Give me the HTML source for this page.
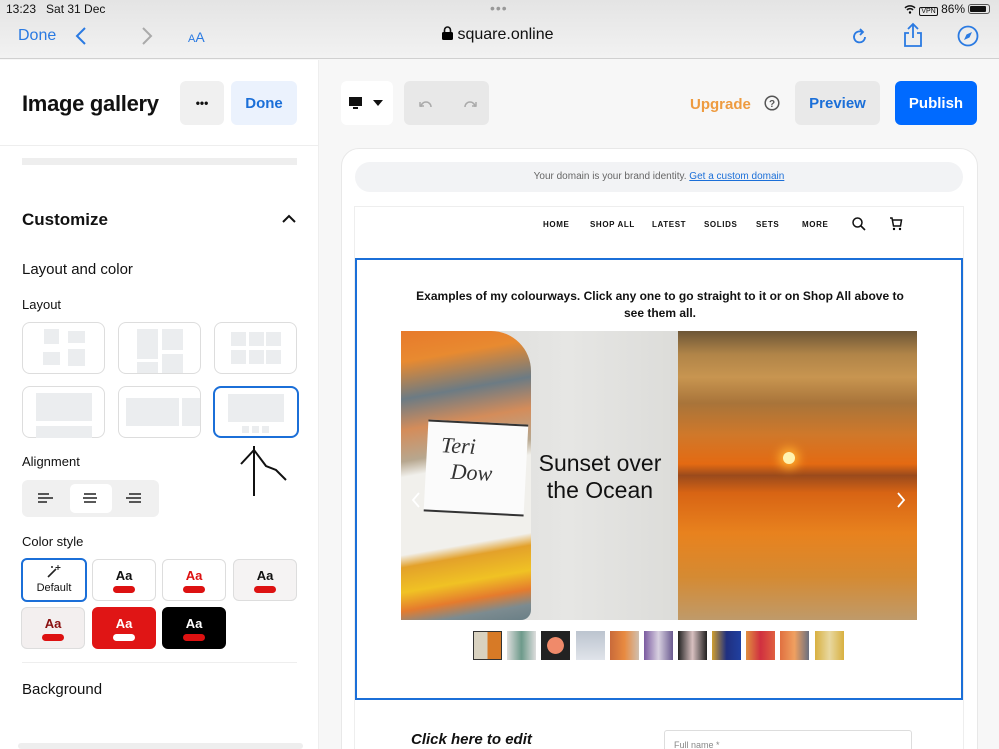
<!DOCTYPE html>
<html><head><meta charset="utf-8">
<style>
*{box-sizing:border-box;margin:0;padding:0}
html,body{width:999px;height:749px;overflow:hidden}
body{position:relative;font-family:"Liberation Sans",sans-serif;background:#f7f7f7;color:#111}
.a{position:absolute}
.top{left:0;top:0;width:999px;height:59px;background:linear-gradient(#e4e4e4,#f2f2f2);border-bottom:1px solid #d0d0d0}
.blue{color:#2a7ae2}
.side{left:0;top:60px;width:319px;height:689px;background:#fff;border-right:1px solid #eee}
.tile{position:absolute;width:83px;height:52px;border:1.5px solid #ddd;border-radius:8px;background:#fff}
.tile i{position:absolute;background:#ebedef}
.cs{position:absolute;width:64px;height:42px;border:1.5px solid #ddd;border-radius:6px;text-align:center;font-weight:bold;font-size:13px;padding-top:8px}
.cs b{display:block;width:22px;height:7px;border-radius:4px;background:#d11;margin:3px auto 0}
.nv{position:absolute;top:220px;font-size:8px;font-weight:bold;letter-spacing:.6px;white-space:nowrap}
.th{position:absolute;top:631px;width:29px;height:29px}
</style></head><body>
<div class="a top"></div>
<div class="a" style="left:6px;top:2px;font-size:12px">13:23&nbsp;&nbsp; Sat 31 Dec</div>
<div class="a" style="left:490px;top:0;font-size:14px;color:#999;letter-spacing:1px">•••</div>
<div class="a" style="left:904px;top:2px;font-size:12px;white-space:nowrap">
<svg width="12" height="10" viewBox="0 0 12 10" style="vertical-align:-1px"><path d="M1 4a7 7 0 0 1 10 0M3 6a4 4 0 0 1 6 0" stroke="#111" stroke-width="1.5" fill="none"/><circle cx="6" cy="8.5" r="1.2"/></svg>
<span style="font-size:7px;border:1px solid #111;border-radius:2px;padding:0 1px">VPN</span> 86% <span style="display:inline-block;width:22px;height:10px;border:1px solid #555;border-radius:3px;padding:1px;vertical-align:-1px"><span style="display:block;width:16px;height:6px;background:#111;border-radius:1px"></span></span></div>
<div class="a blue" style="left:18px;top:27px;font-size:16px">Done</div>
<svg class="a" style="left:74px;top:27px" width="14" height="18"><path d="M11 1L3 9l8 8" stroke="#2a7ae2" stroke-width="2" fill="none"/></svg>
<svg class="a" style="left:140px;top:27px" width="14" height="18"><path d="M3 1l8 8-8 8" stroke="#aaa" stroke-width="2" fill="none"/></svg>
<div class="a blue" style="left:188px;top:29px;font-size:14px"><span style="font-size:11px">A</span>A</div>
<div class="a" style="left:442px;top:26px;font-size:16px">
<svg width="11" height="14" viewBox="0 0 11 14" style="vertical-align:-1px"><rect x="0" y="6" width="11" height="8" rx="1.5"/><path d="M2.5 6V4a3 3 0 0 1 6 0v2" stroke="#111" stroke-width="1.6" fill="none"/></svg> square.online</div>
<svg class="a" style="left:850px;top:27px" width="20" height="20"><path d="M15 10a5.5 5.5 0 1 1-3-5" stroke="#2a7ae2" stroke-width="1.8" fill="none"/><path d="M10 2l3 3-3 3" stroke="#2a7ae2" stroke-width="1.8" fill="none"/></svg>
<svg class="a" style="left:902px;top:22px" width="22" height="26"><path d="M11 2v14M6 7l5-5 5 5M7 11H3v13h16V11h-4" stroke="#2a7ae2" stroke-width="1.8" fill="none"/></svg>
<svg class="a" style="left:957px;top:25px" width="22" height="22"><circle cx="11" cy="11" r="9.5" stroke="#2a7ae2" stroke-width="1.8" fill="none"/><path d="M15 7l-2.5 5.5L7 15l2.5-5.5z" fill="#2a7ae2"/></svg>

<div class="a side"></div>
<div class="a" style="left:22px;top:91px;font-size:22px;font-weight:bold;letter-spacing:-.3px">Image gallery</div>
<div class="a" style="left:180px;top:81px;width:44px;height:44px;background:#f0f0f0;border-radius:6px;text-align:center;line-height:44px;font-weight:bold;font-size:12px">•••</div>
<div class="a" style="left:231px;top:81px;width:66px;height:44px;background:#ebf2fd;border-radius:6px;text-align:center;line-height:46px;font-weight:bold;color:#1b6fd8;font-size:15px">Done</div>
<div class="a" style="left:0;top:145px;width:319px;height:1px;background:#eee"></div>
<div class="a" style="left:22px;top:158px;width:275px;height:7px;background:#eee"></div>
<div class="a" style="left:22px;top:210px;font-size:17px;font-weight:bold">Customize</div>
<svg class="a" style="left:282px;top:214px" width="14" height="10"><path d="M1 8l6-6 6 6" stroke="#111" stroke-width="2" fill="none"/></svg>
<div class="a" style="left:22px;top:261px;font-size:15px">Layout and color</div>
<div class="a" style="left:22px;top:297px;font-size:13px">Layout</div>
<div class="tile" style="left:22px;top:322px"><i style="left:21px;top:6px;width:15px;height:15px"></i><i style="left:45px;top:8px;width:17px;height:12px"></i><i style="left:20px;top:29px;width:17px;height:13px"></i><i style="left:45px;top:26px;width:17px;height:17px"></i></div>
<div class="tile" style="left:118px;top:322px"><i style="left:18px;top:6px;width:21px;height:30px"></i><i style="left:43px;top:6px;width:21px;height:21px"></i><i style="left:18px;top:39px;width:21px;height:11px"></i><i style="left:43px;top:31px;width:21px;height:19px"></i></div>
<div class="tile" style="left:214px;top:322px"><i style="left:16px;top:9px;width:15px;height:14px"></i><i style="left:34px;top:9px;width:15px;height:14px"></i><i style="left:51px;top:9px;width:15px;height:14px"></i><i style="left:16px;top:27px;width:15px;height:14px"></i><i style="left:34px;top:27px;width:15px;height:14px"></i><i style="left:51px;top:27px;width:15px;height:14px"></i></div>
<div class="tile" style="left:22px;top:386px"><i style="left:13px;top:6px;width:56px;height:28px"></i><i style="left:13px;top:39px;width:56px;height:12px"></i></div>
<div class="tile" style="left:118px;top:386px;overflow:hidden"><i style="left:7px;top:11px;width:25px;height:28px"></i><i style="left:32px;top:11px;width:28px;height:28px"></i><i style="left:63px;top:11px;width:25px;height:28px"></i></div>
<div class="tile" style="left:213px;top:386px;width:86px;border:2px solid #1b6fd8"><i style="left:13px;top:6px;width:56px;height:28px"></i><i style="left:27px;top:38px;width:7px;height:7px"></i><i style="left:37px;top:38px;width:7px;height:7px"></i><i style="left:47px;top:38px;width:7px;height:7px"></i></div>
<svg class="a" style="left:238px;top:444px" width="52" height="56"><path d="M16 52V2M3 20L16 6l12 16 10 4 10 10" stroke="#111" stroke-width="2" fill="none"/></svg>
<div class="a" style="left:22px;top:454px;font-size:13px">Alignment</div>
<div class="a" style="left:22px;top:480px;width:137px;height:37px;background:#f0f0f0;border-radius:6px"></div>
<div class="a" style="left:70px;top:484px;width:42px;height:29px;background:#fff;border-radius:5px"></div>
<svg class="a" style="left:38px;top:493px" width="110" height="11"><path d="M0 1h11M0 5h15M0 9h9M46 1h12M45 5h14M46 9h12M91 1h12M88 5h15M91 9h12" stroke="#222" stroke-width="1.6"/></svg>
<div class="a" style="left:22px;top:534px;font-size:13px">Color style</div>
<div class="cs" style="left:21px;top:558px;width:66px;height:44px;border:2px solid #1b6fd8;font-weight:normal;font-size:11px;padding-top:22px">Default</div>
<svg class="a" style="left:47px;top:565px" width="14" height="13"><path d="M1 12l8-8" stroke="#222" stroke-width="1.6"/><path d="M11 0v5M8.5 2.5h5M4 2h2M5 1v2" stroke="#222" stroke-width="1"/></svg>
<div class="cs" style="left:92px;top:559px">Aa<b></b></div>
<div class="cs" style="left:162px;top:559px;color:#d11">Aa<b></b></div>
<div class="cs" style="left:233px;top:559px;background:#f5f3f3">Aa<b></b></div>
<div class="cs" style="left:21px;top:607px;background:#f3efef;color:#8a1010">Aa<b></b></div>
<div class="cs" style="left:92px;top:607px;background:#e01515;border-color:#e01515;color:#fff">Aa<b style="background:#fff"></b></div>
<div class="cs" style="left:162px;top:607px;background:#000;border-color:#000;color:#fff">Aa<b></b></div>
<div class="a" style="left:22px;top:662px;width:275px;height:1px;background:#eee"></div>
<div class="a" style="left:22px;top:681px;font-size:15px">Background</div>
<div class="a" style="left:18px;top:743px;width:285px;height:6px;background:#eee;border-radius:3px"></div>

<div class="a" style="left:341px;top:81px;width:52px;height:44px;background:#fff;border-radius:6px"></div>
<svg class="a" style="left:349px;top:97px" width="36" height="12"><rect x="0" y="0" width="13" height="9" fill="#111"/><rect x="4" y="10" width="5" height="2" fill="#111"/><path d="M24 3h10l-5 6z" fill="#111"/></svg>
<div class="a" style="left:404px;top:81px;width:85px;height:44px;background:#e8e8e8;border-radius:6px"></div>
<svg class="a" style="left:418px;top:98px" width="60" height="12"><path d="M3 9a5 5 0 0 1 10 0M2 4v4h4M57 9a5 5 0 0 0-10 0M58 4v4h-4" stroke="#aaa" stroke-width="1.5" fill="none"/></svg>
<div class="a" style="left:690px;top:96px;font-size:15px;font-weight:bold;color:#ee9b40">Upgrade</div>
<svg class="a" style="left:764px;top:95px" width="16" height="16"><circle cx="8" cy="8" r="6.8" stroke="#555" stroke-width="1.5" fill="none"/><text x="8" y="12" font-size="10" font-weight="bold" text-anchor="middle" fill="#555" font-family="Liberation Sans">?</text></svg>
<div class="a" style="left:795px;top:81px;width:85px;height:44px;background:#e9e9e9;border-radius:6px;text-align:center;line-height:46px;font-weight:bold;color:#1b6fd8;font-size:15px">Preview</div>
<div class="a" style="left:895px;top:81px;width:82px;height:44px;background:#006aff;border-radius:6px;text-align:center;line-height:46px;font-weight:bold;color:#fff;font-size:15px">Publish</div>

<div class="a" style="left:341px;top:148px;width:637px;height:620px;background:#fff;border-radius:18px;border:1px solid #e8e8e8"></div>
<div class="a" style="left:355px;top:162px;width:608px;height:30px;background:#f2f3f5;border-radius:15px;text-align:center;line-height:30px;font-size:10px;color:#666">Your domain is your brand identity. <span style="color:#1b6fd8;text-decoration:underline">Get a custom domain</span></div>
<div class="a" style="left:354px;top:206px;width:610px;height:560px;border:1px solid #eee;background:#fff"></div>
<div class="nv" style="left:543px">HOME</div>
<div class="nv" style="left:590px">SHOP ALL</div>
<div class="nv" style="left:652px">LATEST</div>
<div class="nv" style="left:704px">SOLIDS</div>
<div class="nv" style="left:756px">SETS</div>
<div class="nv" style="left:802px">MORE</div>
<svg class="a" style="left:852px;top:217px" width="14" height="14"><circle cx="5.5" cy="5.5" r="4.5" stroke="#111" stroke-width="1.5" fill="none"/><path d="M9 9l4 4" stroke="#111" stroke-width="1.6"/></svg>
<svg class="a" style="left:889px;top:217px" width="14" height="14"><path d="M1 1h2l1.5 8h7l1-6H4" stroke="#111" stroke-width="1.5" fill="none"/><circle cx="5" cy="12" r="1.2"/><circle cx="11" cy="12" r="1.2"/></svg>
<div class="a" style="left:355px;top:258px;width:608px;height:442px;border:2px solid #1b6fd8;background:#fff"></div>
<div class="a" style="left:405px;top:288px;width:510px;text-align:center;font-size:12px;font-weight:bold;line-height:17px">Examples of my colourways. Click any one to go straight to it or on Shop All above to see them all.</div>
<div class="a" style="left:401px;top:331px;width:277px;height:289px;background:linear-gradient(90deg,#d7d7d5,#e6e6e4 60%,#dcdcd9)"></div>
<div class="a" style="left:401px;top:331px;width:130px;height:289px;background:linear-gradient(170deg,#e77a2b 0%,#e88a30 10%,#6c7b84 22%,#d48c5a 32%,#b7a78f 42%,#f1f0ec 47%,#f1f0ec 72%,#e3a12a 76%,#f0c224 84%,#e57b2d 90%,#7c8b90 95%,#6a7f86 100%);border-radius:0 40px 10px 0"></div>
<div class="a" style="left:426px;top:422px;width:100px;height:92px;background:#fbfbfb;transform:rotate(3deg);border-top:2px solid #333;border-bottom:2px solid #333;font-family:'Liberation Serif',serif;font-style:italic;font-size:22px;color:#333;padding:10px 0 0 14px;line-height:26px">Teri<br>&nbsp;&nbsp;Dow</div>
<div class="a" style="left:530px;top:450px;width:140px;text-align:center;font-size:23px;line-height:27px">Sunset over the Ocean</div>
<div class="a" style="left:678px;top:331px;width:239px;height:289px;background:linear-gradient(180deg,#6d5637 0%,#b08448 8%,#c89550 16%,#a8743a 25%,#d0782a 36%,#e46a12 46%,#9a4a1c 50%,#d86414 56%,#e8821e 70%,#d58a32 85%,#bf9a6a 100%)"></div>
<div class="a" style="left:783px;top:452px;width:12px;height:12px;border-radius:50%;background:#fff3b0;box-shadow:0 0 10px 4px #ffb030"></div>
<svg class="a" style="left:411px;top:492px" width="10" height="16"><path d="M8 1L2 8l6 7" stroke="#fff" stroke-width="1.8" fill="none"/></svg>
<svg class="a" style="left:896px;top:492px" width="10" height="16"><path d="M2 1l6 7-6 7" stroke="#fff" stroke-width="1.8" fill="none"/></svg>
<div class="th" style="left:473px;background:linear-gradient(90deg,#d9d2c0 50%,#d77a26 50%);border:1px solid #333"></div>
<div class="th" style="left:507px;background:linear-gradient(90deg,#ddd,#6d9a8a,#ddd)"></div>
<div class="th" style="left:541px;background:radial-gradient(#f08a6a 40%,#222 42%)"></div>
<div class="th" style="left:576px;background:linear-gradient(#bcc4cf,#e0e4ea)"></div>
<div class="th" style="left:610px;background:linear-gradient(90deg,#c96a3a,#e88a40,#d0c0b0)"></div>
<div class="th" style="left:644px;background:linear-gradient(90deg,#7a5aa0,#d8d0e0,#6a5a90)"></div>
<div class="th" style="left:678px;background:linear-gradient(90deg,#222,#d8c0c0,#222)"></div>
<div class="th" style="left:712px;background:linear-gradient(90deg,#d0a030,#203080,#2040a0)"></div>
<div class="th" style="left:746px;background:linear-gradient(90deg,#e09040,#d03040,#e06040)"></div>
<div class="th" style="left:780px;background:linear-gradient(90deg,#e07040,#f0a060,#6a7080)"></div>
<div class="th" style="left:815px;background:linear-gradient(90deg,#d8b040,#e8d8a0,#d8b040)"></div>
<div class="a" style="left:411px;top:731px;font-size:15px;font-style:italic;font-weight:bold">Click here to edit</div>
<div class="a" style="left:664px;top:730px;width:248px;height:30px;border:1px solid #ddd;border-radius:3px;font-size:9px;color:#888;padding:9px 0 0 9px">Full name *</div>
</body></html>
